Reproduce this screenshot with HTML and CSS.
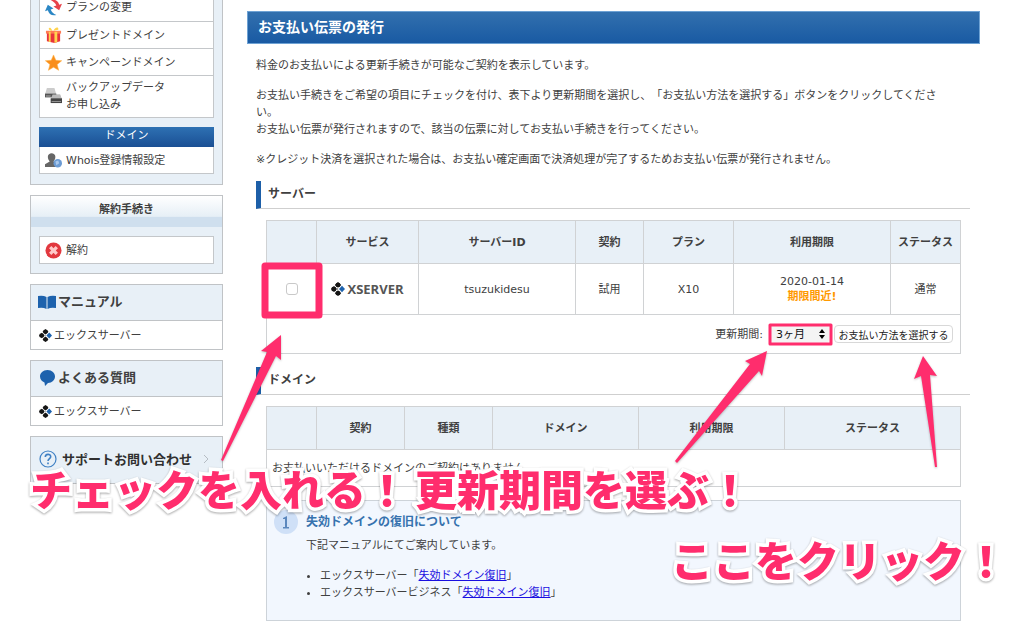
FILE: index.html
```html
<!DOCTYPE html>
<html lang="ja">
<head>
<meta charset="utf-8">
<title>お支払い伝票の発行</title>
<link rel="stylesheet" href="styles.css">
</head>
<body>
<svg class="defs" width="0" height="0" aria-hidden="true">
  <symbol id="xs" viewBox="0 0 14 14">
    <g fill="#151515">
      <rect x="4.700" y=".7" width="4.600" height="4.200" rx="1.500"/>
      <rect x=".5" y="4.800" width="4.600" height="4.400" rx="1.500"/>
      <rect x="4.700" y="9.100" width="4.600" height="4.200" rx="1.500"/>
      <path d="M7 0l3.200 3L7 5.800 3.800 3zM3 4l3 3-3 3-3-3zM7 8.200l3.200 3L7 14l-3.200-2.800z"/>
    </g>
    <path fill="#1d62ad" d="M11 3.800L14 7l-3 3.200L8 7z"/>
    <path fill="#888" d="M6 5.800l1.500 1.200L6 8.200z"/>
  </symbol>
</svg>
<div class="page">
  <aside class="sidebar">
    <section class="panel panel-top">
      <ul class="menu">
        <li><a href="#"><svg viewBox="0 0 18 18"><path fill="#e8434b" d="M6 1c5-1 8 1 9 5l3-1-3 7-6-4 3-1c-1-3-3-4-6-6z"/><path fill="#2b87c5" d="M12 17c-5 1-8-1-9-5l-3 1 3-7 6 4-3 1c1 3 3 4 6 6z"/></svg>プランの変更</a></li>
        <li><a href="#"><svg viewBox="0 0 18 18"><path fill="#e8333c" d="M2 6h14v9l-6 2-8-2z"/><path fill="#ff7a55" d="M1 4h16v3H1z"/><path fill="#ffd34d" d="M4 5h2v11H4zM10 5h3v11l-3 1zM8 4C3 4 3 0 6 1zM9 4c1-4 6-5 5-1z"/></svg>プレゼントドメイン</a></li>
        <li><a href="#"><svg viewBox="0 0 18 18"><path fill="#f98e1b" stroke="#ffb347" stroke-width=".6" d="M9 1l2.500 5.700 6.200.4-4.800 4 1.600 6.200L9 13.900l-5.400 3.400 1.600-6.200-4.800-4 6.200-.4z"/></svg>キャンペーンドメイン</a></li>
        <li class="two"><a href="#"><svg viewBox="0 0 18 18"><path fill="#ccc" d="M2 1h8l2 7H0zM8 8h8l2 6H6z"/><path fill="#555" d="M0 7h12v4H0z"/><path fill="#bbb" d="M8 8h8l2 5H6z"/><path fill="#444" d="M6 12h12v5H6z"/><path fill="#aaa" d="M1 9h5v1H1zM7 15h10v1H7z"/></svg><span>バックアップデータ<br>お申し込み</span></a></li>
      </ul>
      <h3 class="menu-title">ドメイン</h3>
      <ul class="menu">
        <li><a href="#"><svg viewBox="0 0 18 18"><path fill="#666" d="M3 5c0-5 8-5 8 0 0 2-1 4-2 5l4 2v4H0v-3l5-3C4 9 3 7 3 5z"/><circle cx="13.500" cy="12" r="4.500" fill="#6b9bd4"/><path fill="#a9c8ec" d="M11 10l3-1 1 3-3 2z"/></svg>Whois登録情報設定</a></li>
      </ul>
    </section>
    <section class="panel">
      <h2 class="panel-title">解約手続き</h2>
      <ul class="menu boxed">
        <li><a href="#"><svg viewBox="0 0 18 18"><circle cx="9" cy="9" r="8.500" fill="#e2383f"/><path fill="none" stroke="#ffc9c9" stroke-width="3.500" d="M5.500 5.500l7 7M12.500 5.500l-7 7"/></svg>解約</a></li>
      </ul>
    </section>
    <section class="panel">
      <h2 class="link-title"><svg viewBox="0 0 18 18"><path fill="#1d62ad" d="M0 3q5-1 8.500 1v12Q5 14 0 15zM18 3q-5-1-8.500 1v12Q13 14 18 15z"/></svg>マニュアル</h2>
      <a class="link-row" href="#"><svg><use href="#xs"/></svg>エックスサーバー</a>
    </section>
    <section class="panel">
      <h2 class="link-title"><svg viewBox="0 0 18 18"><path fill="#1d62ad" d="M9.500 1C14 1 17 4 17 7.500S14 14 10 14l-3 3-.5-3.500C4 12.500 2 10.500 2 7.500 2 4 5 1 9.500 1z"/></svg>よくある質問</h2>
      <a class="link-row" href="#"><svg><use href="#xs"/></svg>エックスサーバー</a>
    </section>
    <a class="panel support" href="#"><svg viewBox="0 0 18 18" fill="none" stroke="#3f80c4" stroke-width="1.200"><circle cx="9" cy="9" r="8"/><path stroke-width="1.600" d="M6.300 7c0-3.500 5.400-3.500 5.400-.3C11.700 8.500 9 8.700 9 11M9 12.500v1.700"/></svg><span>サポートお問い合わせ</span><svg class="chev" viewBox="0 0 6 10"><path fill="none" stroke="#b5bcc3" d="M1 1l4 4-4 4"/></svg></a>
  </aside>

  <main class="main">
    <h1 class="title">お支払い伝票の発行</h1>
    <div class="content">
      <p>料金のお支払いによる更新手続きが可能なご契約を表示しています。</p>
      <p>お支払い手続きをご希望の項目にチェックを付け、表下より更新期間を選択し、「お支払い方法を選択する」ボタンをクリックしてくださ<br>い。<br>お支払い伝票が発行されますので、該当の伝票に対してお支払い手続きを行ってください。</p>
      <p>※クレジット決済を選択された場合は、お支払い確定画面で決済処理が完了するためお支払い伝票が発行されません。</p>

      <h2 class="section">サーバー</h2>
      <div class="block">
        <table>
          <colgroup><col class="w50"><col class="w102"><col class="w157"><col class="w68"><col class="w90"><col class="w157"><col class="w70"></colgroup>
          <thead><tr><th></th><th>サービス</th><th>サーバーID</th><th>契約</th><th>プラン</th><th>利用期限</th><th>ステータス</th></tr></thead>
          <tbody>
            <tr class="server">
              <td><input type="checkbox" aria-label="tsuzukidesuを選択"></td>
              <td><span class="logo"><svg><use href="#xs"/></svg>XSERVER</span></td>
              <td>tsuzukidesu</td><td>試用</td><td>X10</td>
              <td>2020-01-14<br><strong class="soon">期限間近!</strong></td>
              <td>通常</td>
            </tr>
            <tr><td colspan="7"><div class="actions"><label for="term">更新期間:</label><span class="select"><select id="term"><option>3ヶ月</option></select><svg viewBox="0 0 6 10"><path d="M3 0l3 4H0zM3 10l3-4H0z"/></svg></span><button type="button">お支払い方法を選択する</button></div></td></tr>
          </tbody>
        </table>
      </div>

      <h2 class="section">ドメイン</h2>
      <div class="block">
        <table>
          <colgroup><col class="w50"><col class="w88"><col class="w88"><col class="w146"><col class="w146"><col class="w176"></colgroup>
          <thead><tr><th></th><th>契約</th><th>種類</th><th>ドメイン</th><th>利用期限</th><th>ステータス</th></tr></thead>
          <tbody><tr><td class="empty" colspan="6">お支払いいただけるドメインのご契約はありません。</td></tr></tbody>
        </table>
      </div>

      <section class="info">
        <svg viewBox="0 0 24 24"><circle cx="12" cy="12" r="12" fill="#cfe0f7"/><path fill="#5b87bd" d="M9 8l4-2v11h2v1.500H9V17h2V9H9z"/></svg>
        <div>
          <h3>失効ドメインの復旧について</h3>
          <p>下記マニュアルにてご案内しています。</p>
          <ul>
            <li>エックスサーバー「<a href="#">失効ドメイン復旧</a>」</li>
            <li>エックスサーバービジネス「<a href="#">失効ドメイン復旧</a>」</li>
          </ul>
        </div>
      </section>
    </div>
  </main>

  <svg class="marks" width="1024" height="628" viewBox="0 0 1024 628" aria-hidden="true">
    <g fill="none" stroke="#ff2d6d" stroke-linejoin="round">
      <rect x="265" y="266" width="54" height="49" stroke-width="7"/>
      <rect x="770" y="325" width="61" height="19" stroke-width="3"/>
    </g>
    <g class="arrows" fill="#ff2d6d">
      <path d="M281 335L261 351 267 352 221 460 223 461 276 356 281 360z"/>
      <path d="M767 351L745 361 750 364 675 461 677 463 759 371 762 376z"/>
      <path d="M923 356L914 379 921 376 935 467 937 467 930 375 937 376z"/>
    </g>
  </svg>
  <p class="note note-check">チェックを入れる！</p>
  <p class="note note-term">更新期間を選ぶ！</p>
  <p class="note note-click">ここをクリック！</p>
</div>
</body>
</html>
```

FILE: styles.css
```css
* { box-sizing: border-box; }
body {
  margin: 0;
  background: #fff;
  color: #404040;
  font: 11px/17px "DejaVu Sans", "Noto Sans CJK JP", sans-serif;
  text-spacing-trim: space-all;
}
h1, h2, h3, p, ul { margin: 0; padding: 0; }
svg { flex: none; }
.defs { position: absolute; }
.page {
  position: relative;
  display: flex;
  gap: 24px;
  min-height: 100vh;
  padding: 0 44px 8px 30px;
  overflow: hidden;
}

/* sidebar */
.sidebar {
  flex: none;
  width: 193px;
  display: flex;
  flex-direction: column;
  gap: 10px;
}
.panel { border: 1px solid #c0c3c6; background: #e8f0f7; }
.panel-top { border-top: 0; padding: 0 8px 10px; }
.menu { list-style: none; background: #fff; border: 1px solid #c4c7ca; border-top: 0; }
.menu li + li { border-top: 1px solid #c4c7ca; }
.menu a {
  display: flex;
  align-items: center;
  gap: 4px;
  height: 26px;
  padding-left: 5px;
  color: #404040;
  text-decoration: none;
}
.panel-top > .menu:first-child li:first-child a { height: 21px; padding-bottom: 7px; }
.menu .two a { height: 41px; padding-bottom: 2px; }
.menu svg { width: 17px; height: 17px; }
.menu-title {
  margin-top: 9px;
  height: 20px;
  background: linear-gradient(#2e71b3, #1a4f94);
  color: #fff;
  font-size: 11px;
  font-weight: normal;
  line-height: 18px;
  text-align: center;
}
.boxed { margin: 9px 8px; border-top: 1px solid #c4c7ca; }
.panel-title {
  height: 31px;
  background: linear-gradient(#fff, #e6eff6 66%, #cfdfee 67%);
  font-size: 11px;
  line-height: 28px;
  text-align: center;
}
.link-title {
  display: flex;
  align-items: center;
  gap: 2px;
  height: 36px;
  padding: 0 0 2px 7px;
  border-bottom: 1px solid #c0c3c6;
  font-size: 13px;
}
.link-title svg, .support svg { width: 18px; height: 18px; }
.link-row {
  display: flex;
  align-items: center;
  gap: 2px;
  height: 28px;
  padding-left: 8px;
  background: #fff;
  color: #404040;
  text-decoration: none;
}
.link-row svg { width: 13px; height: 13px; }
.support {
  display: flex;
  align-items: center;
  gap: 5px;
  height: 48px;
  padding: 0 0 2px 8px;
  color: #303030;
  font-size: 13px;
  font-weight: bold;
  text-decoration: none;
}
.support .chev { width: 6px; height: 10px; margin-left: 6px; }

/* main column */
.main { flex: 1; min-width: 0; padding-top: 11px; }
.title {
  height: 33px;
  padding-left: 10px;
  border: 1px solid #6ea2d4;
  background: linear-gradient(#3270ae, #195aa3);
  color: #fff;
  font-size: 14px;
  line-height: 30px;
}
.content { padding: 13px 10px 0 9px; }
.content > p { margin-bottom: 13px; }
.section {
  height: 28px;
  padding-left: 7px;
  border-left: 5px solid #1d5fa8;
  border-bottom: 1px solid #cfcfcf;
  font-size: 12px;
  line-height: 27px;
}
.block { padding: 11px 9px 13px 10px; }
table { width: 100%; table-layout: fixed; border-collapse: collapse; }
th, td { border: 1px solid #d0d2d4; padding: 0; text-align: center; }
th { height: 43px; background: #e8f0f7; white-space: nowrap; }
.w50 { width: 50px; }
.w68 { width: 68px; }
.w70 { width: 70px; }
.w88 { width: 88px; }
.w90 { width: 90px; }
.w102 { width: 102px; }
.w146 { width: 146px; }
.w157 { width: 157px; }
.w176 { width: 176px; }
.server td { height: 51px; line-height: 15px; }
.soon { color: #ff9900; }
input {
  appearance: none;
  display: block;
  width: 12px;
  height: 12px;
  margin: 0 auto;
  border: 1px solid #c9c9c9;
  border-radius: 3px;
  background: #fff;
}
.logo {
  display: flex;
  align-items: center;
  justify-content: center;
  gap: 2px;
  color: #555;
  font: bold 13px/16px "Open Sans", sans-serif;
}
.logo svg { width: 14px; height: 14px; }
.actions {
  display: flex;
  align-items: center;
  justify-content: flex-end;
  gap: 5px;
  height: 38px;
  padding-right: 7px;
}
.select { position: relative; display: flex; margin-left: 3px; }
select {
  appearance: none;
  width: 58px;
  height: 18px;
  padding: 0 5px;
  border: 0;
  border-radius: 3px;
  background: #f4f4f4;
  color: #111;
  font: inherit;
}
.select svg { position: absolute; right: 4px; top: 4px; width: 6px; height: 10px; }
button {
  width: 119px;
  height: 18px;
  padding: 0;
  border: 1px solid #d8d8d8;
  border-radius: 4px;
  background: #fff;
  color: #222;
  font: 10px/15px "Noto Sans CJK JP", sans-serif;
  white-space: nowrap;
}
td.empty { height: 37px; padding-left: 5px; text-align: left; }

.info {
  display: flex;
  gap: 8px;
  margin: 0 9px 0 10px;
  padding: 9px 7px 19px;
  border: 1px solid #cdd3d9;
  background: #f2f7fe;
}
.info > svg { width: 24px; height: 24px; }
.info h3 { margin: 4px 0 6px; color: #3672ae; font-size: 12px; }
.info p { margin-bottom: 13px; }
.info ul { padding-left: 14px; }
.info a { color: #1a0fe0; }

/* hand-drawn guidance over the screen */
.marks { position: absolute; left: 0; top: 0; pointer-events: none; }
.arrows { filter: drop-shadow(0 1px 1px rgba(0, 0, 0, .25)); }
.note {
  position: absolute;
  color: #ff2d6d;
  font: 900 42px/60px "Noto Sans CJK JP", sans-serif;
  white-space: nowrap;
  -webkit-text-stroke: 7px #fff;
  paint-order: stroke fill;
  stroke-linejoin: round;
  filter: drop-shadow(0 1px 1px rgba(0, 0, 0, .35));
}
.note-check { left: 30px; top: 458px; }
.note-term { left: 415px; top: 458px; }
.note-click { left: 671px; top: 529px; }
```
